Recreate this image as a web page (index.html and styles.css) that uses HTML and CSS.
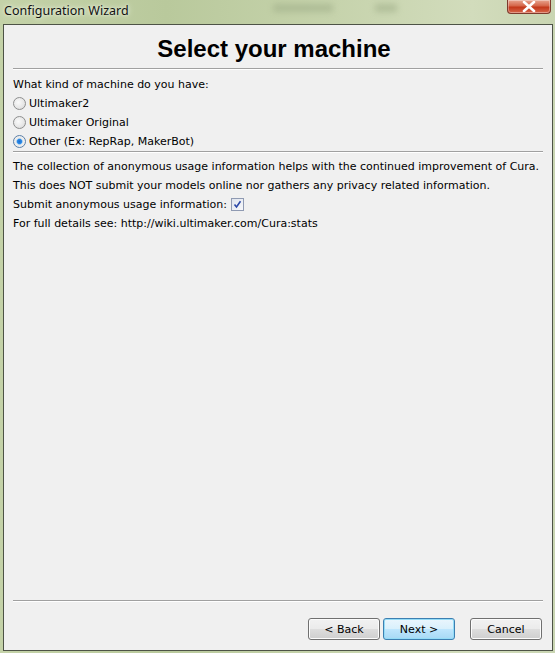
FILE: index.html
```html
<!DOCTYPE html>
<html>
<head>
<meta charset="utf-8">
<link rel="stylesheet" href="styles.css">
</head>
<body>
<div class="window">
  <div class="titlebar">
    <span class="title">Configuration Wizard</span>
    <span class="blur b1"></span>
    <span class="blur b2"></span>
    <div class="close">
      <svg width="14" height="11" viewBox="0 0 14 11"><path d="M2 1 L12 10 M12 1 L2 10" stroke="#fff" stroke-width="2.6" stroke-linecap="round"/></svg>
    </div>
  </div>
  <div class="client">
    <div class="page">
      <h1 class="heading">Select your machine</h1>
      <div class="sep"></div>
      <div class="line">What kind of machine do you have:</div>
      <label class="line radio"><span class="rb"></span>Ultimaker2</label>
      <label class="line radio"><span class="rb"></span>Ultimaker Original</label>
      <label class="line radio"><span class="rb on"></span>Other (Ex: RepRap, MakerBot)</label>
      <div class="sep sep2"></div>
      <div class="line">The collection of anonymous usage information helps with the continued improvement of Cura.</div>
      <div class="line">This does NOT submit your models online nor gathers any privacy related information.</div>
      <div class="line">Submit anonymous usage information: <span class="cb"><svg width="9" height="9" viewBox="0 0 9 9"><path d="M1.5 4.5 L3.5 7 L7.5 1.2" stroke="#2a47a8" stroke-width="1.6" fill="none"/></svg></span></div>
      <div class="line">For full details see: http://wiki.ultimaker.com/Cura:stats</div>
    </div>
    <div class="footer">
      <div class="sep"></div>
      <div class="buttons">
        <button class="btn">&lt; Back</button>
        <button class="btn default">Next &gt;</button>
        <button class="btn cancel">Cancel</button>
      </div>
    </div>
  </div>
</div>
</body>
</html>
```
FILE: styles.css
```css
html, body {
  margin: 0;
  padding: 0;
}
body {
  width: 555px;
  height: 653px;
  overflow: hidden;
  font-family: "DejaVu Sans", sans-serif;
}
.window {
  width: 555px;
  height: 653px;
  box-sizing: border-box;
  background: linear-gradient(90deg, #c4d2a8 0%, #b9c99c 30%, #c6d3ac 60%, #d2dcbc 85%, #c9d5b2 100%);
  padding: 0 2px 2px 3px;
  display: flex;
  flex-direction: column;
}
.titlebar {
  height: 24px;
  position: relative;
  flex: none;
}
.title {
  position: absolute;
  left: 1px;
  top: 2px;
  font-family: "Noto Sans", sans-serif;
  font-size: 12.5px;
  color: #111;
  text-shadow: 0 0 6px #eef2e4, 0 0 3px #eef2e4;
}
.blur {
  position: absolute;
  top: 4px;
  height: 8px;
  background: #9fae88;
  filter: blur(3px);
  opacity: 0.6;
}
.b1 { left: 270px; width: 60px; }
.b2 { left: 372px; width: 22px; }
.close {
  position: absolute;
  right: 2px;
  top: 0;
  width: 44px;
  height: 14px;
  box-sizing: border-box;
  border: 1px solid #7d3a2c;
  border-top: none;
  border-radius: 0 0 4px 4px;
  background: linear-gradient(#e8a58f 0%, #d5664a 45%, #c3381a 55%, #d6674c 100%);
  display: flex;
  align-items: center;
  justify-content: center;
  box-shadow: inset 0 0 0 1px rgba(255,255,255,0.35);
}
.client {
  flex: 1;
  border: 1px solid #4d5346;
  background: #f0f0f0;
  display: flex;
  flex-direction: column;
  font-size: 11px;
  color: #000;
}
.page {
  flex: 1;
  padding: 0 9px 0 9px;
}
.heading {
  margin: 0;
  height: 43px;
  display: flex;
  align-items: center;
  justify-content: center;
  font-family: "Liberation Sans", Arial, sans-serif;
  font-weight: bold;
  font-size: 24px;
  padding: 4px 8px 0 0;
  box-sizing: border-box;
}
.sep {
  height: 1px;
  background: #a0a0a0;
  border-bottom: 1px solid #ffffff;
  margin-bottom: 5px;
}
.sep2 {
  margin-top: 0;
  margin-bottom: 4px;
}
.line {
  display: flex;
  align-items: center;
  height: 19px;
  white-space: nowrap;
}
.radio {
  gap: 3px;
}
.rb {
  width: 11px;
  height: 11px;
  border-radius: 50%;
  border: 1px solid #8e8f8f;
  background: radial-gradient(circle at 40% 40%, #fafafa 0%, #e6e6e6 60%, #d0d0d0 100%);
  flex: none;
}
.rb.on {
  background: radial-gradient(circle, #1f6fd0 0%, #2a88e6 28%, #8ec4f2 36%, #eaeaea 45%, #f6f6f6 100%);
  border-color: #5a7fa8;
}
.cb {
  display: inline-flex;
  align-items: center;
  justify-content: center;
  width: 11px;
  height: 11px;
  margin-left: 4px;
  border: 1px solid #8f9ab2;
  background: linear-gradient(135deg, #dfe4ee, #f6f7fa);
}
.footer {
  flex: none;
  padding: 0 9px 10px 9px;
}
.footer .sep {
  margin-bottom: 16px;
}
.buttons {
  display: flex;
  justify-content: flex-end;
  padding-right: 1px;
}
.btn {
  width: 72px;
  height: 22px;
  box-sizing: border-box;
  border: 1px solid #707070;
  border-radius: 3px;
  background: linear-gradient(#f2f2f2 0%, #ebebeb 48%, #dddddd 52%, #cfcfcf 100%);
  box-shadow: inset 0 0 0 1px #fcfcfc;
  font-family: "DejaVu Sans", sans-serif;
  font-size: 11px;
  color: #000;
  padding: 0;
  margin-left: 3px;
}
.btn.default {
  border-color: #3c7fb1;
  background: linear-gradient(#eaf6fd 0%, #d9f0fc 48%, #bee6fd 52%, #a7d9f5 100%);
  box-shadow: inset 0 0 0 1px #94dcf7;
}
.btn.cancel {
  margin-left: 15px;
}
```
